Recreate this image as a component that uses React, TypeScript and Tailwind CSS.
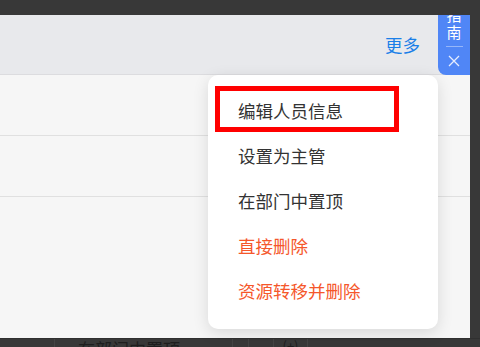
import React from 'react';

const items = [
  { label: '编辑人员信息', danger: false },
  { label: '设置为主管', danger: false },
  { label: '在部门中置顶', danger: false },
  { label: '直接删除', danger: true },
  { label: '资源转移并删除', danger: true },
];

const App: React.FC = () => {
  return (
    <div
      className="w-[480px] h-[347px] bg-[#383838] flex flex-col overflow-hidden"
      style={{ fontFamily: '"Noto Sans CJK SC", "Noto Sans", sans-serif' }}
    >
      <div className="h-[15px] shrink-0"></div>

      <div className="flex h-[323px] shrink-0">
        <div className="relative w-[470px] h-full bg-[#f6f6f6]">
          {/* header */}
          <div className="h-[60px] bg-[#e8e9ec] border-b border-[#dcdcdf] flex items-center justify-end pr-[50px]">
            <span className="text-[17.5px] text-[#1a7fe8] leading-none">更多</span>
          </div>
          <div className="h-[61px] border-b border-[#e0e0e0]"></div>
          <div className="h-[61px] border-b border-[#e0e0e0]"></div>

          {/* guide tab */}
          <div className="absolute right-0 top-0 w-[32px] h-[60px] bg-[#5086f6] rounded-bl-[8px] overflow-hidden flex flex-col items-center text-white">
            <div className="-mt-[9px] flex flex-col items-center text-[15px] leading-[17px]">
              <span>指</span>
              <span>南</span>
            </div>
            <div className="w-[17px] h-px bg-white/40 mt-[6px]"></div>
            <svg width="12" height="12" viewBox="0 0 12 12" className="mt-[8px]">
              <path d="M1 1 L11 11 M11 1 L1 11" stroke="white" strokeWidth="1.3" opacity="0.85" />
            </svg>
          </div>

          {/* dropdown */}
          <div className="absolute left-[208px] top-[60px] w-[230px] h-[254px] bg-white rounded-[10px] shadow-[0_4px_16px_rgba(0,0,0,0.12)] py-[14px]">
            {items.map((it) => (
              <div
                key={it.label}
                className={`h-[45px] flex items-center pl-[30px] text-[17.5px] ${it.danger ? 'text-[#f5572b]' : 'text-[#333333]'}`}
              >
                {it.label}
              </div>
            ))}
            <div className="absolute left-[7px] top-[11px] w-[184px] h-[46px] border-[5px] border-[#ff0000]"></div>
          </div>
        </div>
        <div className="w-[10px] h-full"></div>
      </div>

      {/* clipped bottom strip */}
      <div className="h-[9px] shrink-0 flex overflow-hidden border-t border-[#303030]">
        <div className="w-[55px] h-full border-r border-[#444]"></div>
        <div className="w-[177px] h-full pl-[23px]">
          <span className="block text-[17px] leading-[20px] text-[#1e1e1e]">在部门中置顶</span>
        </div>
        <div className="w-[16px] h-full border-l border-[#444]"></div>
        <div className="w-[25px] h-full border-l border-[#444]"></div>
        <div className="w-[34px] h-full border-l border-[#444] flex justify-center">
          <span className="text-[13px] leading-[14px] text-[#1e1e1e]">(+)</span>
        </div>
        <div className="flex-1 border-l border-[#444]"></div>
      </div>
    </div>
  );
};

export default App;
